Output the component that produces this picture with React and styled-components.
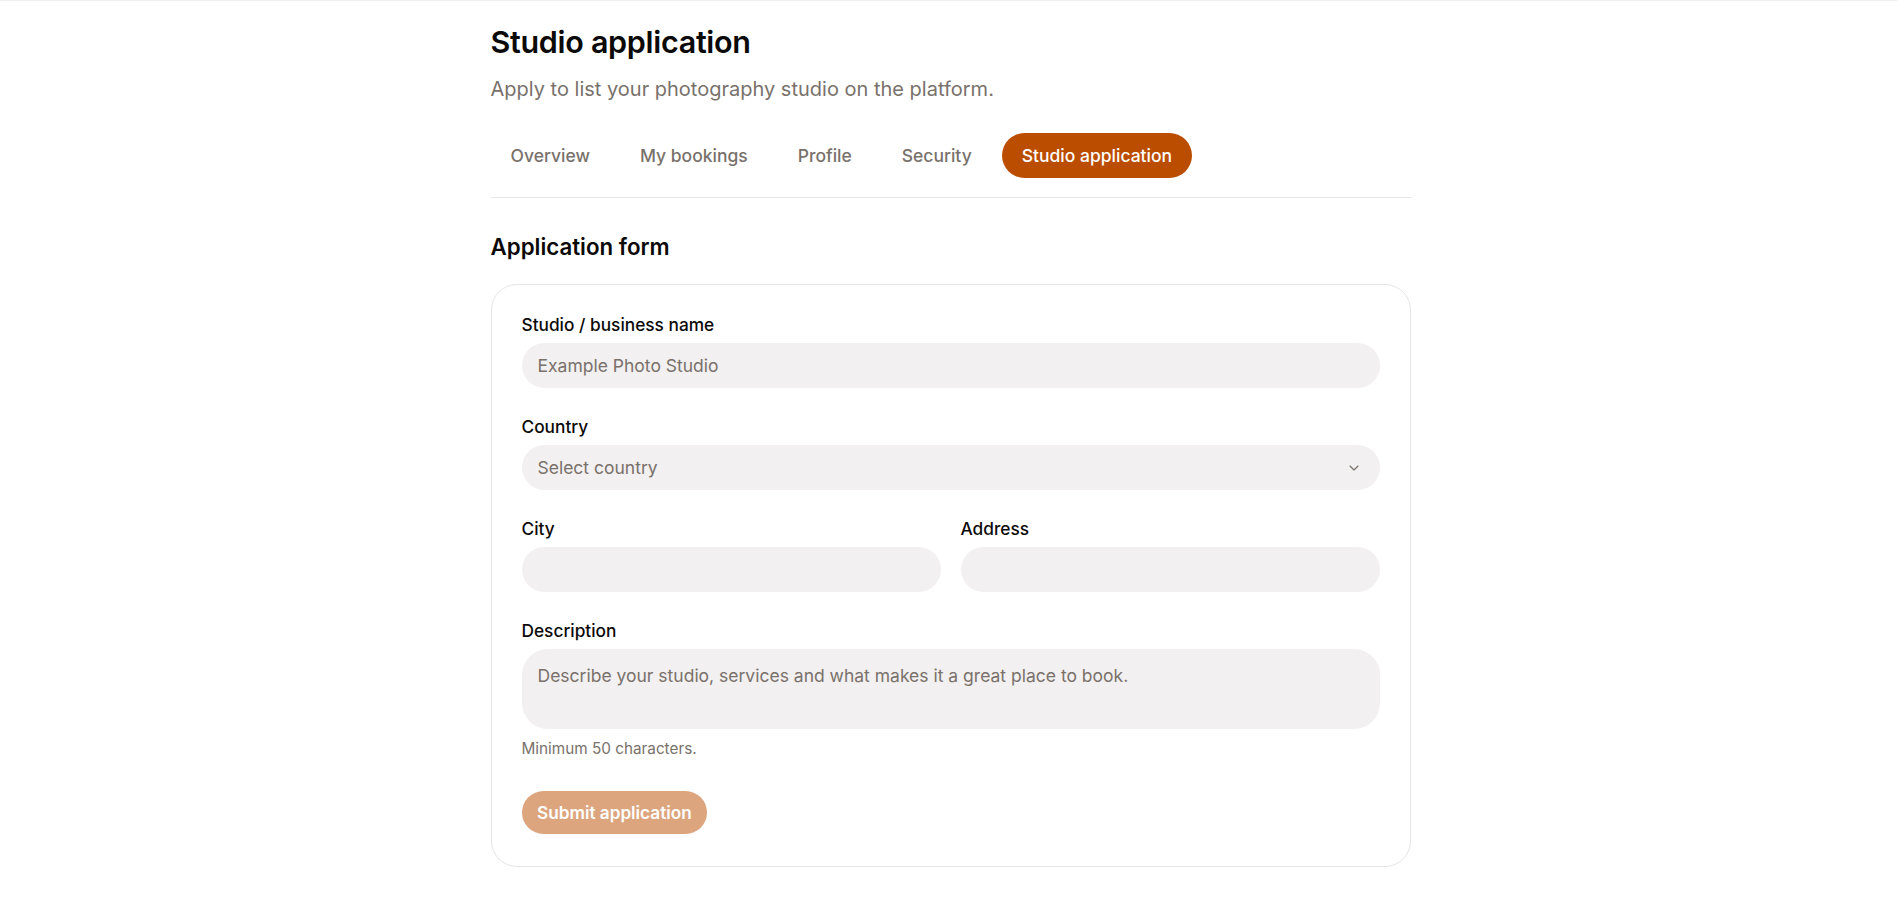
import React from "react";
import styled, { createGlobalStyle } from "styled-components";
import { ChevronDown } from "lucide-react";

const GlobalStyle = createGlobalStyle`
  * {
    box-sizing: border-box;
  }
  body {
    margin: 0;
    background: #fff;
    font-family: Inter, "Noto Sans", sans-serif;
    color: #0c0a09;
    -webkit-font-smoothing: antialiased;
  }
`;

const TopRule = styled.div`
  border-top: 1px solid #f1efee;
`;

const Page = styled.main`
  max-width: 920px;
  margin: 0 auto;
  padding: 23px 0 34px;
  position: relative;
  left: 2px;
`;

const Title = styled.h1`
  margin: 0;
  font-size: 30.5px;
  line-height: 36px;
  font-weight: 600;
  letter-spacing: -0.01em;
`;

const Subtitle = styled.p`
  margin: 15px 0 0;
  font-size: 20px;
  line-height: 28px;
  color: #79716b;
`;

const Tabs = styled.nav`
  display: flex;
  gap: 10px;
  margin-top: 30px;
  padding-bottom: 19px;
  border-bottom: 1px solid #e7e5e4;
`;

const Tab = styled.button`
  border: none;
  border-radius: 9999px;
  padding: 12px 20px;
  font-family: inherit;
  font-size: 17.5px;
  line-height: 21px;
  font-weight: 500;
  cursor: pointer;
  background: ${(p) => (p.$active ? "#bb4d00" : "transparent")};
  color: ${(p) => (p.$active ? "#fff" : "#79716b")};
`;

const SectionTitle = styled.h2`
  margin: 35px 0 0;
  font-size: 22.3px;
  line-height: 28px;
  font-weight: 600;
`;

const Card = styled.form`
  margin-top: 23px;
  border: 1px solid #e7e5e4;
  border-radius: 26px;
  padding: 29px 30px 32px;
  display: flex;
  flex-direction: column;
  gap: 28px;
`;

const Row = styled.div`
  display: grid;
  grid-template-columns: 1fr 1fr;
  gap: 20px;
`;

const Field = styled.div`
  display: flex;
  flex-direction: column;
  gap: 7px;
`;

const Label = styled.label`
  font-size: 17.3px;
  line-height: 22px;
  font-weight: 500;
  color: #0c0a09;
`;

const fieldBase = `
  width: 100%;
  border: none;
  outline: none;
  background: #f2f0f0;
  font-family: inherit;
  font-size: 17.5px;
  color: #0c0a09;
  &::placeholder {
    color: #79716b;
  }
`;

const Input = styled.input`
  ${fieldBase}
  height: 45px;
  border-radius: 9999px;
  padding: 0 16px;
`;

const SelectBox = styled.div`
  height: 45px;
  border-radius: 9999px;
  background: #f2f0f0;
  display: flex;
  align-items: center;
  justify-content: space-between;
  padding: 0 18px 0 16px;
  font-size: 17.5px;
  color: #79716b;
  cursor: pointer;
`;

const TextArea = styled.textarea`
  ${fieldBase}
  height: 80px;
  border-radius: 26px;
  padding: 15px 16px;
  line-height: 24px;
  resize: none;
`;

const Hint = styled.p`
  margin: 2px 0 0;
  font-size: 15.3px;
  line-height: 22px;
  color: #79716b;
`;

const Actions = styled.div`
  display: flex;
  margin-top: 3px;
`;

const SubmitButton = styled.button`
  border: none;
  border-radius: 9999px;
  background: #bb4d00;
  opacity: 0.5;
  color: #fff;
  font-family: inherit;
  font-size: 17.2px;
  line-height: 24px;
  font-weight: 600;
  padding: 9.5px 15.5px;
  cursor: not-allowed;
`;

const tabs = ["Overview", "My bookings", "Profile", "Security", "Studio application"];

export default function App() {
  return (
    <>
      <GlobalStyle />
      <TopRule />
      <Page>
        <Title>Studio application</Title>
        <Subtitle>Apply to list your photography studio on the platform.</Subtitle>
        <Tabs>
          {tabs.map((t) => (
            <Tab key={t} $active={t === "Studio application"}>
              {t}
            </Tab>
          ))}
        </Tabs>

        <SectionTitle>Application form</SectionTitle>
        <Card onSubmit={(e) => e.preventDefault()}>
          <Field>
            <Label>Studio / business name</Label>
            <Input placeholder="Example Photo Studio" />
          </Field>
          <Field>
            <Label>Country</Label>
            <SelectBox>
              <span>Select country</span>
              <ChevronDown size={16} strokeWidth={1.75} color="#79716b" />
            </SelectBox>
          </Field>
          <Row>
            <Field>
              <Label>City</Label>
              <Input />
            </Field>
            <Field>
              <Label>Address</Label>
              <Input />
            </Field>
          </Row>
          <Field>
            <Label>Description</Label>
            <TextArea placeholder="Describe your studio, services and what makes it a great place to book." />
            <Hint>Minimum 50 characters.</Hint>
          </Field>
          <Actions>
            <SubmitButton type="submit" disabled>
              Submit application
            </SubmitButton>
          </Actions>
        </Card>
      </Page>
    </>
  );
}
